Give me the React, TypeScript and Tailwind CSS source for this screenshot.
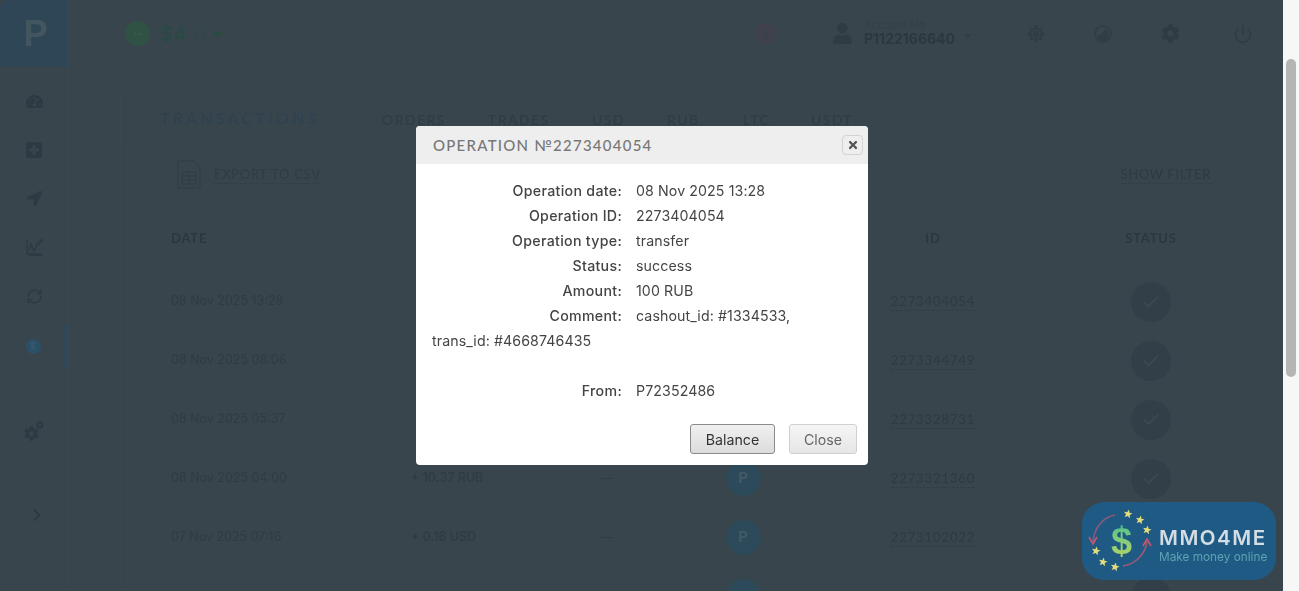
import React from "react";
import { FaPlusSquare, FaLocationArrow, FaCog, FaUser, FaTachometerAlt, FaCaretDown, FaSun, FaTimes, FaExclamation, FaChevronRight, FaEllipsisH } from "react-icons/fa";
import { Check, Power, RefreshCw } from "lucide-react";

const futura = "font-['Lato','Liberation_Sans',sans-serif]";
const inter = "font-['Inter','Liberation_Sans',sans-serif]";

const rows = [
  { d: "08 Nov 2025 13:28", a: "", id: "2273404054" },
  { d: "08 Nov 2025 08:06", a: "", id: "2273344749" },
  { d: "08 Nov 2025 05:37", a: "", id: "2273328731" },
  { d: "08 Nov 2025 04:00", a: "+ 10.37 RUB", id: "2273321360" },
  { d: "07 Nov 2025 07:16", a: "+ 0.18 USD", id: "2273102022" },
];

const info: [string, string][] = [
  ["Operation date:", "08 Nov 2025 13:28"],
  ["Operation ID:", "2273404054"],
  ["Operation type:", "transfer"],
  ["Status:", "success"],
  ["Amount:", "100 RUB"],
  ["Comment:", "cashout_id: #1334533, trans_id: #4668746435"],
];

function Star({ x, y }: { x: number; y: number }) {
  const pts = [];
  for (let i = 0; i < 10; i++) {
    const r = i % 2 ? 2 : 4.6;
    const t = (Math.PI / 5) * i - Math.PI / 2 + 0.2;
    pts.push(`${x + r * Math.cos(t)},${y + r * Math.sin(t)}`);
  }
  return <polygon points={pts.join(" ")} fill="#e3dc7a" />;
}

function Logo() {
  return (
    <div className="absolute left-[1082px] top-[502px] flex h-[78px] w-[194px] items-center rounded-[22px] bg-[#1f5a85] blur-[0.4px]">
      <div className="relative h-[78px] w-[77px] shrink-0">
        <svg width="77" height="78" viewBox="0 0 77 78" className="absolute left-0 top-0">
          <path d="M33 13 C21 15 12 26 11 40" fill="none" stroke="#8a5a78" strokeWidth="1.6" />
          <path d="M7 35 L11 42 L15 35" fill="none" stroke="#c9566e" strokeWidth="1.6" />
          <path d="M41 64 C54 62 63 52 65 40" fill="none" stroke="#9a5a75" strokeWidth="1.6" />
          <path d="M61 44 L65 37 L69 44" fill="none" stroke="#c9566e" strokeWidth="1.6" />
          <Star x={46} y={12} />
          <Star x={58} y={18} />
          <Star x={65} y={28} />
          <Star x={14} y={49} />
          <Star x={21} y={60} />
          <Star x={33} y={65} />
        </svg>
        <div className="absolute left-[29px] top-[17px] bg-gradient-to-b from-[#2fbf8f] to-[#c0d65a] bg-clip-text font-['Liberation_Sans',sans-serif] text-[38px] font-bold leading-[44px] text-transparent">
          $
        </div>
      </div>
      <div className="flex flex-col pt-[8px]">
        <span className="font-['Inter',sans-serif] text-[20.5px] font-semibold leading-[24px] tracking-[1.5px] text-[#d3dde3]">MMO4ME</span>
        <span className="font-['Inter',sans-serif] text-[11.8px] leading-[15px] text-[#5fa3b0]">Make money online</span>
      </div>
    </div>
  );
}

function NavIcon({ children, h }: { children: React.ReactNode; h: string }) {
  return <div className={`flex w-full items-center justify-center ${h}`}>{children}</div>;
}

export default function App() {
  return (
    <div className={`relative flex h-[591px] w-full overflow-hidden bg-[#f7f7f7] ${inter}`}>
      <div className="flex w-[1283px] shrink-0 overflow-hidden bg-[#39454d]">
        <div className="flex w-full blur-[0.5px]">
          {/* Sidebar */}
          <aside className="flex w-[69px] shrink-0 flex-col border-r border-[#3b474f] text-[#2e3a43]">
            <div className="flex h-[67px] w-[68px] items-center justify-center rounded-tl-[10px] bg-[#2e4655] pl-[3px] font-['Liberation_Sans',sans-serif] text-[36px] font-bold text-[#43565f]">
              P
            </div>
            <div className="flex flex-col pt-[10px]">
              <NavIcon h="h-[48px]"><FaTachometerAlt size={17} /></NavIcon>
              <NavIcon h="h-[49px]"><FaPlusSquare size={18} /></NavIcon>
              <NavIcon h="h-[49px]"><FaLocationArrow size={15} /></NavIcon>
              <NavIcon h="h-[49px]">
                <svg width="17" height="17" viewBox="0 0 17 17" fill="none" stroke="currentColor" strokeWidth="1.4">
                  <path d="M1 1V15H16" />
                  <path d="M3 12L5 5L8 12L12 4L14 6" />
                  <path d="M3 16.4H16" />
                  <circle cx="15" cy="2" r="1.2" fill="currentColor" />
                </svg>
              </NavIcon>
              <NavIcon h="h-[49px]"><RefreshCw size={17} strokeWidth={2} /></NavIcon>
              <div className="mt-[3px] flex h-[44px] w-full items-center justify-center border-r-[3px] border-[#284a62] pl-[1px]">
                <div className="flex h-[15px] w-[15px] items-center justify-center rounded-full bg-[#2b5068] text-[9px] text-[#3f5d71]">$</div>
              </div>
              <NavIcon h="h-[126px]">
                <div className="relative h-[20px] w-[20px]">
                  <FaCog size={15} className="absolute bottom-0 left-0" />
                  <FaCog size={8} className="absolute right-0 top-0" />
                </div>
              </NavIcon>
              <NavIcon h="h-[42px]"><FaChevronRight size={14} className="ml-[5px]" /></NavIcon>
            </div>
          </aside>

          {/* Main */}
          <main className="flex min-w-0 flex-1 flex-col">
            <header className="flex h-[67px] shrink-0 items-center text-[#323e46]">
              <div className="ml-[56px] flex h-[25px] w-[25px] items-center justify-center rounded-full bg-[#2f5244] text-[#3e5a4e]">
                <FaEllipsisH size={8} />
              </div>
              <div className="ml-[10px] flex w-[95px] items-center">
                <span className="text-[20px] font-medium text-[#294a44]">$4</span>
                <span className="text-[14px] text-[#324648]">.33</span>
                <FaCaretDown size={16} className="ml-[3px] text-[#294a3f]" />
              </div>
              <div className="ml-[500px] flex h-[21px] w-[21px] items-center justify-center rounded-full bg-[#40414a] text-[#394249]">
                <FaExclamation size={9} />
              </div>
              <FaUser size={21} className="ml-[56px] text-[#303c44]" />
              <div className="ml-[11px] flex flex-col">
                <span className="text-[11px] leading-[11px] text-[#343f47]">Account No</span>
                <span className="text-[14px] font-bold leading-[16px] text-[#2c373f]">P1122166640</span>
              </div>
              <FaCaretDown size={13} className="ml-[6px] mt-[4px] text-[#323e46]" />
              <FaSun size={18} className="ml-[53px] text-[#313d45]" />
              <svg width="18" height="18" viewBox="0 0 18 18" className="ml-[49px] text-[#313d45]" fill="none">
                <circle cx="9" cy="9" r="8" stroke="currentColor" strokeWidth="1.6" />
                <path d="M3 10C6 11 9 9 11 4C13 6 15 8 15 10C15 14 12 16 9 16C6 16 4 13 3 10Z" fill="currentColor" />
              </svg>
              <FaCog size={19} className="ml-[49px] text-[#303c44]" />
              <Power size={20} strokeWidth={2} className="ml-[53px] text-[#313d45]" />
            </header>

            <section className="ml-[51px] mt-[25px] flex min-h-0 flex-1 flex-col border-l border-[#3b474f]">
              <div className={`flex h-[50px] shrink-0 items-center ${futura}`}>
                <div className="flex h-full w-[238px] items-center justify-center border border-b-0 border-[#3b474f] text-[16px] tracking-[3.3px] text-[#2e4150]">
                  TRANSACTIONS
                </div>
                <div className="flex items-center pt-[4px] text-[14px] font-medium tracking-[1.4px] text-[#303c44]">
                  <span className="ml-[23px] w-[106px]">ORDERS</span>
                  <span className="w-[104px]">TRADES</span>
                  <span className="w-[75px]">USD</span>
                  <span className="w-[76px]">RUB</span>
                  <span className="w-[68px]">LTC</span>
                  <span>USDT</span>
                </div>
              </div>

              <div className={`flex h-[64px] shrink-0 items-center pl-[56px] pr-[72px] ${futura}`}>
                <svg width="24" height="29" viewBox="0 0 24 29" className="shrink-0 text-[#303c44]" fill="none" stroke="currentColor" strokeWidth="1">
                  <path d="M1 1H17L23 7V28H1Z" />
                  <path d="M5 12H19V24H5ZM5 16H19M5 20H19M12 12V24" />
                </svg>
                <span className="ml-[13px] border-b border-dotted border-[#303b43] text-[13px] leading-[18px] tracking-[0.7px] text-[#303c44]">EXPORT TO CSV</span>
                <span className="ml-auto border-b border-dotted border-[#303b43] text-[13px] font-medium leading-[18px] tracking-[0.6px] text-[#2f3a42]">SHOW FILTER</span>
              </div>

              <div className={`grid h-[66px] shrink-0 grid-cols-[240px_170px_52px_220px_160px_240px] items-center pl-[50px] text-[13px] font-bold tracking-[0.8px] text-[#2c373f] ${futura}`}>
                <span>DATE</span>
                <span />
                <span />
                <span />
                <span className="text-center">ID</span>
                <span className="pl-[36px] text-center">STATUS</span>
              </div>

              <div className="flex flex-col">
                {rows.map((r) => (
                  <div key={r.id} className="grid h-[59px] shrink-0 grid-cols-[240px_170px_52px_220px_160px_240px] items-center pl-[50px] text-[12.5px] text-[#303b43]">
                    <span>{r.d}</span>
                    <span className="font-semibold">{r.a}</span>
                    <span className="text-center">—</span>
                    <div className="flex justify-center">
                      <div className="flex h-[35px] w-[35px] items-center justify-center rounded-full bg-[#2c4a5a] text-[15px] font-bold text-[#42596a]">P</div>
                    </div>
                    <div className="flex justify-center">
                      <span className={`border-b border-dotted border-[#2e3941] text-[13px] leading-[18px] tracking-[0.9px] text-[#2f3a42] ${futura}`}>{r.id}</span>
                    </div>
                    <div className="flex justify-center pl-[36px]">
                      <div className="flex h-[40px] w-[40px] items-center justify-center rounded-full bg-[#323f48] text-[#3b4a53]">
                        <Check size={20} strokeWidth={2} />
                      </div>
                    </div>
                  </div>
                ))}
                <div className="grid h-[59px] shrink-0 grid-cols-[240px_170px_52px_220px_160px_240px] items-center pl-[50px]">
                  <span />
                  <span />
                  <span />
                  <div className="flex justify-center">
                    <div className="h-[35px] w-[35px] rounded-full bg-[#2c4a5a]" />
                  </div>
                  <span />
                  <div className="flex justify-center pl-[36px]">
                    <div className="h-[40px] w-[40px] rounded-full bg-[#323f48]" />
                  </div>
                </div>
              </div>
            </section>
          </main>
        </div>
      </div>

      {/* Page scrollbar */}
      <div className="flex w-[16px] shrink-0 justify-center bg-[#f7f7f7] pt-[59px]">
        <div className="h-[318px] w-[10px] rounded-[5px] bg-[#b5b5b5]" />
      </div>

      {/* Dialog */}
      <div className="absolute left-[416px] top-[126px] flex h-[339px] w-[452px] flex-col overflow-hidden rounded-[4px] bg-white">
        <div className="flex h-[38px] shrink-0 items-center justify-between bg-[#eeeeee] pl-[17px] pr-[5px]">
          <span className={`text-[15px] font-medium tracking-[1.25px] text-[#777777] ${futura}`}>OPERATION №2273404054</span>
          <button className="flex h-[20px] w-[21px] items-center justify-center rounded-[4px] border border-[#d3d3d3] bg-[#eeeeee] text-[#555555]">
            <FaTimes size={12} />
          </button>
        </div>
        <div className="pb-0 pl-[16px] pr-[40px] pt-[14px] text-[14.2px] leading-[25px] tracking-[0.1px] text-[#444444]">
          {info.map(([k, v]) => (
            <div key={k}>
              <span className="mr-[14px] inline-block w-[190px] text-right font-medium tracking-[0.3px]">{k}</span>
              {v}
            </div>
          ))}
          <div className="h-[25px]" />
          <div>
            <span className="mr-[14px] inline-block w-[190px] text-right font-medium tracking-[0.3px]">From:</span>
            P72352486
          </div>
        </div>
        <div className="mt-auto flex justify-end gap-[14px] pb-[11px] pr-[11px] text-[14.2px]">
          <button className="h-[30px] w-[85px] rounded-[3px] border border-[#8a8a8a] bg-gradient-to-b from-[#f0f0f0] to-[#dcdcdc] pt-[1px] text-[#333333]">Balance</button>
          <button className="h-[30px] w-[68px] rounded-[3px] border border-[#d0d0d0] bg-gradient-to-b from-[#f5f5f5] to-[#e6e6e6] pt-[1px] text-[#666666]">Close</button>
        </div>
      </div>

      <Logo />
    </div>
  );
}
